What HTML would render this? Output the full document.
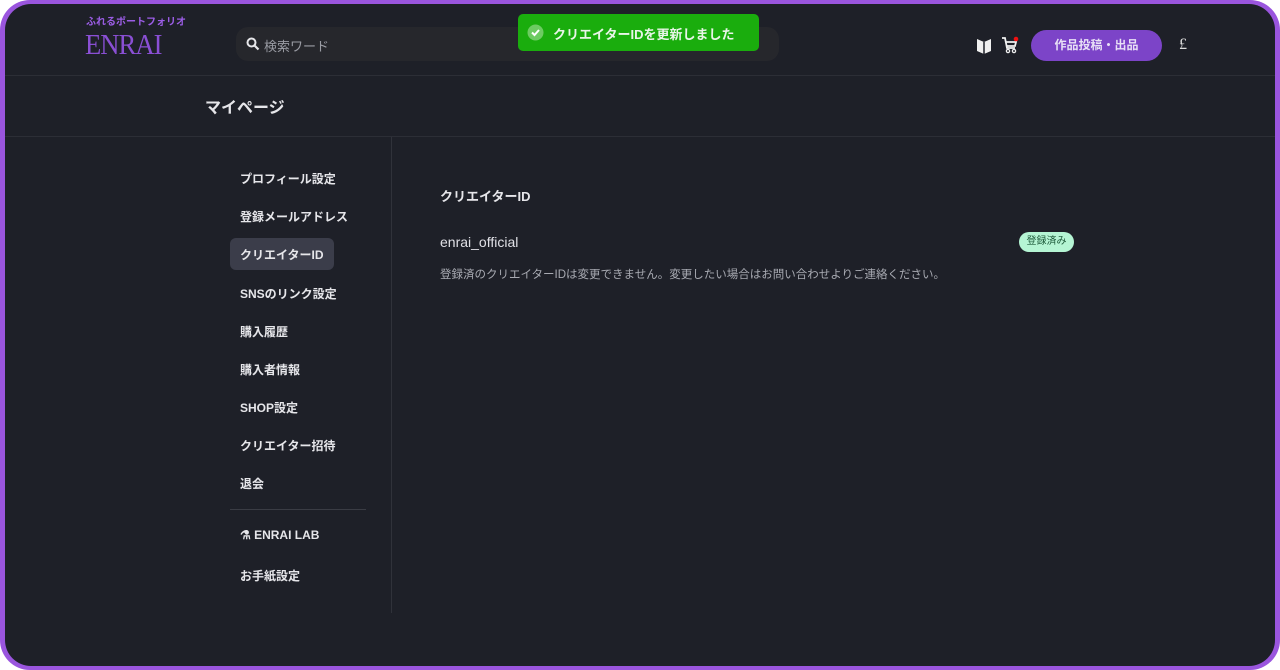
<!DOCTYPE html>
<html><head><meta charset="utf-8"><style>
*{margin:0;padding:0;box-sizing:border-box}
html,body{width:1280px;height:670px;overflow:hidden;background:#fff}
body{font-family:"Liberation Sans","Noto Sans CJK JP",sans-serif;color:#e6e6ea}
.frame{position:absolute;left:0;top:0;width:1280px;height:670px;border-radius:30px;background:#9a55de}
.in{position:absolute;left:5px;top:4px;width:1270px;height:662px;border-radius:26px;background:#1e2028;overflow:hidden}
.hdr{position:absolute;left:0;top:0;width:100%;height:72px;border-bottom:1px solid #2c2e36}
.sub{position:absolute;left:81px;top:9px;font-size:10px;font-weight:bold;color:#9b5de5}
.logo{position:absolute;left:80px;top:26px;font-family:"Liberation Serif",serif;font-size:28px;color:#8a4fd4;letter-spacing:-1px;transform:scaleX(0.95);transform-origin:left}
.search{position:absolute;left:231px;top:23px;width:543px;height:34px;border-radius:12px;background:#26272c}
.search span{position:absolute;left:28px;top:9px;font-size:13px;color:#9a9ca4}
.toast{position:absolute;left:513px;top:10px;width:241px;height:37px;border-radius:5px;background:#1aad0d;color:#e8f5e8;font-size:13px;font-weight:bold}
.toast span{position:absolute;left:35px;top:10px}
.btn{position:absolute;left:1026px;top:26px;width:131px;height:31px;border-radius:16px;background:#7c44c8;color:#e8e0f6;font-size:12px;font-weight:bold;text-align:center;line-height:31px}
.tt{position:absolute;left:200px;top:90px;font-size:16px;font-weight:bold}
.line2{position:absolute;left:0;top:132px;width:100%;height:1px;background:#2c2e36}
.vl{position:absolute;left:386px;top:133px;width:1px;height:476px;background:#30323a}
.nav{position:absolute;left:235px;font-size:12px;font-weight:bold;color:#e6e6ea}
.act{position:absolute;left:225px;top:234px;width:104px;height:32px;border-radius:6px;background:#3b3d4a}
.hr{position:absolute;left:225px;top:505px;width:136px;height:1px;background:#3a3c44}
.h2{position:absolute;left:435px;top:182px;font-size:13px;font-weight:bold}
.id{position:absolute;left:435px;top:230px;font-size:14px;color:#e0e0e6}
.badge{position:absolute;left:1014px;top:228px;width:55px;height:20px;border-radius:10px;background:#b5f5d4;color:#1d5a3a;font-size:10px;text-align:center;line-height:20px}
.note{position:absolute;left:435px;top:262px;font-size:11.5px;color:#a8aab2}
</style></head><body>
<div class="frame"></div>
<div class="in">
<div class="hdr">
<div class="sub">ふれるポートフォリオ</div>
<div class="logo">ENRAI</div>
<div class="search"><svg style="position:absolute;left:10px;top:10px" width="14" height="14" viewBox="0 0 14 14"><circle cx="5.5" cy="5.5" r="4" fill="none" stroke="#e6e6ea" stroke-width="2"/><path d="M8.5 8.5L12.5 12.5" stroke="#e6e6ea" stroke-width="2.2"/></svg><span>検索ワード</span></div>
<svg style="position:absolute;left:971px;top:33px" width="16" height="18" viewBox="0 0 16 18"><path d="M1 2L8 5L15 2V14L8 17L1 14Z" fill="#f0f0f0"/><path d="M8 5V17" stroke="#1e2028" stroke-width="1.5"/></svg>
<svg style="position:absolute;left:996px;top:32px" width="18" height="18" viewBox="0 0 18 18"><path d="M1 2H4L6 12H14M5 6H15L14 10H6" fill="none" stroke="#f0f0f0" stroke-width="1.8"/><circle cx="7" cy="15" r="1.6" fill="none" stroke="#f0f0f0" stroke-width="1.3"/><circle cx="13" cy="15" r="1.6" fill="none" stroke="#f0f0f0" stroke-width="1.3"/><circle cx="15" cy="3" r="2.3" fill="#f01010"/></svg>
<div class="btn">作品投稿・出品</div>
<div style="position:absolute;left:1174px;top:32px;font-family:'Liberation Serif',serif;font-size:16px;color:#ddd">£</div>
</div>
<div class="toast"><svg style="position:absolute;left:9px;top:10px" width="17" height="17" viewBox="0 0 17 17"><circle cx="8.5" cy="8.5" r="8" fill="#6dcb62"/><path d="M5 8.5L7.5 11L12 6" fill="none" stroke="#fff" stroke-width="2"/></svg><span>クリエイターIDを更新しました</span></div>
<div class="tt">マイページ</div>
<div class="line2"></div>
<div class="vl"></div>
<div class="act"></div>
<div class="nav" style="top:166px">プロフィール設定</div>
<div class="nav" style="top:204px">登録メールアドレス</div>
<div class="nav" style="top:242px">クリエイターID</div>
<div class="nav" style="top:281px">SNSのリンク設定</div>
<div class="nav" style="top:319px">購入履歴</div>
<div class="nav" style="top:357px">購入者情報</div>
<div class="nav" style="top:395px">SHOP設定</div>
<div class="nav" style="top:433px">クリエイター招待</div>
<div class="nav" style="top:471px">退会</div>
<div class="hr"></div>
<div class="nav" style="top:524px">⚗ ENRAI LAB</div>
<div class="nav" style="top:563px">お手紙設定</div>
<div class="h2">クリエイターID</div>
<div class="id">enrai_official</div>
<div class="badge">登録済み</div>
<div class="note">登録済のクリエイターIDは変更できません。変更したい場合はお問い合わせよりご連絡ください。</div>
</div>
</body></html>
